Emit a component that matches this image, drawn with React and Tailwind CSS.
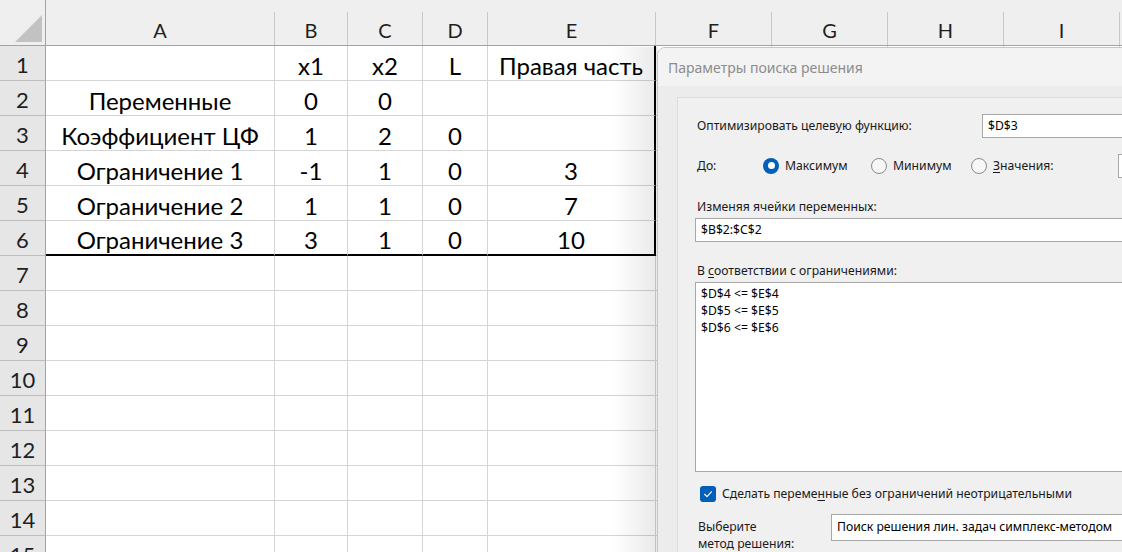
import React from 'react';

// ─── Sheet geometry ───────────────────────────────────────────────────────────
const COLS = [
  { key: 'A', w: 'w-[229px]' },
  { key: 'B', w: 'w-[73px]' },
  { key: 'C', w: 'w-[75px]' },
  { key: 'D', w: 'w-[65px]' },
  { key: 'E', w: 'w-[168px]' },
  { key: 'F', w: 'w-[116px]' },
  { key: 'G', w: 'w-[116px]' },
  { key: 'H', w: 'w-[116px]' },
  { key: 'I', w: 'w-[116px]' },
  { key: 'J', w: 'w-[60px]' },
];

const DATA = [
  ['', 'x1', 'x2', 'L', 'Правая часть'],
  ['Переменные', '0', '0', '', ''],
  ['Коэффициент ЦФ', '1', '2', '0', ''],
  ['Ограничение 1', '-1', '1', '0', '3'],
  ['Ограничение 2', '1', '1', '0', '7'],
  ['Ограничение 3', '3', '1', '0', '10'],
];

const ROW_COUNT = 15;

function ColumnHeaders() {
  return (
    <div className="flex h-[46px] shrink-0">
      <div className="w-[46px] h-full shrink-0 bg-[#efefef] border-b border-r border-[#a3a3a3] flex items-end justify-end pr-[3px] pb-[3px]">
        <svg width="27" height="27" viewBox="0 0 27 27">
          <polygon points="27,0 27,27 0,27" fill="#c2c2c2" />
        </svg>
      </div>
      {COLS.map((c) => (
        <div key={c.key} className={`${c.w} h-full shrink-0 flex bg-[#efefef] border-b border-[#a3a3a3]`}>
          <div className="flex-1 flex items-center justify-center pt-[15px] text-[20px] text-[#1f1f1f] leading-none">
            {c.key}
          </div>
          <div className="w-px h-[33px] self-end bg-[#c8c8c8]" />
        </div>
      ))}
    </div>
  );
}

function SheetRow({ index }) {
  const values = DATA[index - 1] || [];
  return (
    <div className="flex h-[35px] shrink-0">
      <div className="w-[46px] h-full shrink-0 bg-[#e6e6e6] border-r border-r-[#a3a3a3] border-b border-b-[#bdbdbd] flex items-center justify-center pt-[4px] text-[22px] text-[#1f1f1f] leading-none">
        {index}
      </div>
      {COLS.map((c, ci) => {
        const inTable = index <= 6 && ci <= 4;
        const rightThick = index <= 6 && ci === 4;
        const bottomThick = index === 6 && ci <= 4;
        return (
          <div
            key={c.key}
            className={`${c.w} h-full shrink-0 flex items-center justify-center pt-[5px] leading-none text-[24px] text-black bg-white
              ${rightThick ? 'border-r-2 border-r-black' : 'border-r border-r-[#d4d4d4]'}
              ${bottomThick ? 'border-b-2 border-b-black' : 'border-b border-b-[#d4d4d4]'}`}
          >
            {inTable ? values[ci] : ''}
          </div>
        );
      })}
    </div>
  );
}

// ─── Solver dialog ────────────────────────────────────────────────────────────
function Radio({ checked }) {
  return checked ? (
    <div className="w-[16px] h-[16px] rounded-full bg-[#005fb8] flex items-center justify-center shrink-0">
      <div className="w-[7px] h-[7px] rounded-full bg-white" />
    </div>
  ) : (
    <div className="w-[16px] h-[16px] rounded-full border border-[#8a8a8a] bg-[#f7f7f7] shrink-0" />
  );
}

function SolverDialog() {
  return (
    <div className="absolute left-[657px] top-[47px] w-[620px] h-[540px] rounded-tl-[8px] border border-[#c6c6c6] bg-[#ececec] overflow-hidden font-['Noto_Sans',sans-serif] text-[12.2px] text-[#1a1a1a]">
      <div className="h-[38px] bg-[#f3f3f3] flex items-center pl-[10px] text-[14px] text-[#8c8c8c]">
        Параметры поиска решения
      </div>
      <div className="pl-[19px] pt-[11px]">
        <div className="h-[500px] border-l border-t border-[#dcdcdc] bg-[#f0f0f0] pl-[17px] pt-[16px]">
          {/* target */}
          <div className="flex items-center h-[24px]">
            <div className="w-[287px] shrink-0 pl-[2px]">
              Оптимизировать целев<span className="underline underline-offset-2">у</span>ю функцию:
            </div>
            <div className="w-[200px] shrink-0 h-[24px] border border-[#a8a8a8] bg-white flex items-center pl-[5px] text-black">
              $D$3
            </div>
          </div>

          {/* direction */}
          <div className="flex items-center h-[24px] mt-[16px]">
            <div className="w-[68px] shrink-0 pl-[2px]">До:</div>
            <div className="w-[108px] shrink-0 flex items-center gap-[6px]">
              <Radio checked />
              <span>Максимум</span>
            </div>
            <div className="w-[100px] shrink-0 flex items-center gap-[6px]">
              <Radio />
              <span>Минимум</span>
            </div>
            <div className="w-[147px] shrink-0 flex items-center gap-[6px]">
              <Radio />
              <span>
                <span className="underline underline-offset-2">З</span>начения:
              </span>
            </div>
            <div className="w-[80px] shrink-0 h-[24px] border border-[#a8a8a8] bg-white" />
          </div>

          {/* variable cells */}
          <div className="mt-[21px] h-[16px] leading-[16px] pl-[2px]">Изменяя ячейки переменных:</div>
          <div className="mt-[3px] w-[560px] h-[24px] border border-[#a8a8a8] bg-white flex items-center pl-[5px] text-black">
            $B$2:$C$2
          </div>

          {/* constraints */}
          <div className="mt-[21px] h-[16px] leading-[16px] pl-[2px]">
            В <span className="underline underline-offset-2">с</span>оответствии с ограничениями:
          </div>
          <div className="mt-[3px] w-[560px] h-[190px] border border-[#a8a8a8] bg-white pl-[5px] pt-[2px] leading-[17px] text-black">
            <div>$D$4 &lt;= $E$4</div>
            <div>$D$5 &lt;= $E$5</div>
            <div>$D$6 &lt;= $E$6</div>
          </div>

          {/* non-negative */}
          <div className="mt-[14px] h-[16px] flex items-center gap-[6px] pl-[5px]">
            <div className="w-[16px] h-[16px] rounded-[3px] bg-[#005fb8] flex items-center justify-center shrink-0">
              <svg width="16" height="16" viewBox="0 0 16 16">
                <path d="M4.6 8.3 L7 10.6 L11.4 5.8" fill="none" stroke="#fff" strokeWidth="1.2" strokeLinecap="round" strokeLinejoin="round" />
              </svg>
            </div>
            <span>
              Сделать переме<span className="underline underline-offset-2">н</span>ные без ограничений неотрицательными
            </span>
          </div>

          {/* method */}
          <div className="mt-[12px] flex">
            <div className="w-[136px] shrink-0 pl-[3px] pt-[4px] leading-[17px]">
              <div>Выберите</div>
              <div>метод решения:</div>
            </div>
            <div className="w-[360px] shrink-0 h-[27px] border border-[#a8a8a8] bg-white flex items-center pl-[5px] text-black">
              Поиск решения лин. задач симплекс-методом
            </div>
          </div>
        </div>
      </div>
    </div>
  );
}

export default function App() {
  return (
    <div className="relative w-[1122px] h-[552px] overflow-hidden bg-white font-['Lato','Noto_Sans',sans-serif]">
      <div className="flex flex-col">
        <ColumnHeaders />
        {Array.from({ length: ROW_COUNT }, (_, i) => (
          <SheetRow key={i} index={i + 1} />
        ))}
      </div>

      {/* dialog drop shadow over the sheet */}
      <div className="absolute left-[612px] top-[47px] w-[46px] bottom-0 bg-linear-to-r from-transparent to-[rgba(0,0,0,0.09)] pointer-events-none" />

      <SolverDialog />
    </div>
  );
}
